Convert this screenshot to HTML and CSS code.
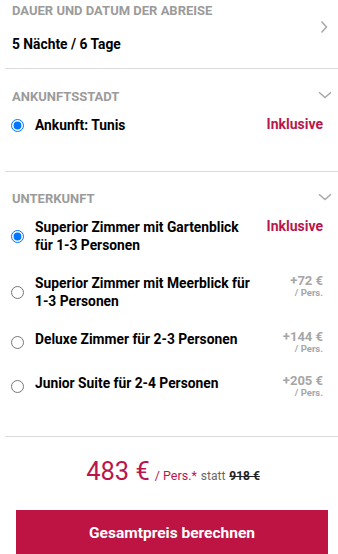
FILE: index.html
```html
<!DOCTYPE html>
<html lang="de">
<head>
<meta charset="utf-8">
<link rel="stylesheet" href="styles.css">
</head>
<body>
<div class="panel">
  <section class="block block-duration">
    <div class="duration-main">
      <div class="title">Dauer und Datum der Abreise</div>
      <div class="value">5 Nächte / 6 Tage</div>
    </div>
    <svg class="chev-right" width="8" height="14" viewBox="0 0 8 14"><polyline points="1.5,1.5 6.5,7 1.5,12.5" fill="none" stroke="#a8a8a8" stroke-width="1.5"/></svg>
  </section>

  <section class="block block-city">
    <div class="head">
      <div class="title">Ankunftsstadt</div>
      <svg class="chev-down" width="14" height="8" viewBox="0 0 14 8"><polyline points="1,1.2 7,6.5 13,1.2" fill="none" stroke="#a8a8a8" stroke-width="1.5"/></svg>
    </div>
    <label class="option">
      <input type="radio" name="city" checked>
      <span class="opt-text">Ankunft: Tunis</span>
      <span class="incl">Inklusive</span>
    </label>
  </section>

  <section class="block block-room">
    <div class="head">
      <div class="title">Unterkunft</div>
      <svg class="chev-down" width="14" height="8" viewBox="0 0 14 8"><polyline points="1,1.2 7,6.5 13,1.2" fill="none" stroke="#a8a8a8" stroke-width="1.5"/></svg>
    </div>
    <div class="options">
      <label class="option">
        <input type="radio" name="room" checked>
        <span class="opt-text">Superior Zimmer mit Gartenblick für 1-3 Personen</span>
        <span class="incl">Inklusive</span>
      </label>
      <label class="option">
        <input type="radio" name="room">
        <span class="opt-text">Superior Zimmer mit Meerblick für 1-3 Personen</span>
        <span class="extra"><span class="extra-price">+72 €</span><span class="extra-unit">/ Pers.</span></span>
      </label>
      <label class="option">
        <input type="radio" name="room">
        <span class="opt-text">Deluxe Zimmer für 2-3 Personen</span>
        <span class="extra"><span class="extra-price">+144 €</span><span class="extra-unit">/ Pers.</span></span>
      </label>
      <label class="option">
        <input type="radio" name="room">
        <span class="opt-text">Junior Suite für 2-4 Personen</span>
        <span class="extra"><span class="extra-price">+205 €</span><span class="extra-unit">/ Pers.</span></span>
      </label>
    </div>
  </section>

  <div class="total">
    <div class="price-line">
      <span class="price">483 €</span>
      <span class="per">/ Pers.*</span>
      <span class="statt">statt</span>
      <span class="old">918 €</span>
    </div>
    <button class="cta">Gesamtpreis berechnen</button>
  </div>
</div>
</body>
</html>
```

FILE: styles.css
```css
* { box-sizing: border-box; }
html, body { margin: 0; padding: 0; background: #fff; }
body {
  font-family: Roboto, "Liberation Sans", sans-serif;
  color: #000;
  width: 338px;
}
.panel {
  padding-left: 5px;
}
.block {
  border-bottom: 1px solid #dcdcdc;
}
.title {
  font-size: 13px;
  font-weight: 700;
  color: #9b9b9b;
  text-transform: uppercase;
  line-height: 16px;
  padding-left: 7px;
}
.block-duration {
  display: flex;
  align-items: flex-start;
  justify-content: space-between;
  padding: 3px 0 15px 0;
}
.value {
  margin-top: 16px;
  font-size: 13.8px;
  font-weight: 700;
  line-height: 18px;
  padding-left: 7px;
}
.chev-right {
  margin-top: 17px;
  margin-right: 10px;
}
.head {
  display: flex;
  align-items: center;
  justify-content: space-between;
  padding-right: 6px;
}
.chev-down { margin-top: -4px; }
.block-city {
  padding: 20px 0 37px 0;
}
.block-room {
  padding: 19px 0 38px 0;
}
.block-city .option { margin-top: 11px; }
.options {
  margin-top: 11px;
  display: flex;
  flex-direction: column;
  gap: 20px;
}
.option {
  display: flex;
  align-items: center;
  padding-left: 6px;
  padding-right: 15px;
}
.option input {
  margin: 0;
  width: 13px;
  height: 13px;
  flex: none;
}
.opt-text {
  align-self: flex-start;
  margin-left: 11px;
  width: 218px;
  font-size: 13.8px;
  font-weight: 700;
  line-height: 18px;
}
.incl {
  align-self: flex-start;
  margin-left: auto;
  color: #b8174b;
  font-weight: 700;
  font-size: 14px;
  line-height: 16px;
}
.extra {
  align-self: flex-start;
  margin-left: auto;
  display: flex;
  flex-direction: column;
  align-items: flex-end;
  color: #a6a6a6;
  font-weight: 700;
}
.extra-price { font-size: 13px; line-height: 14px; }
.extra-unit { font-size: 9.5px; line-height: 10px; }
.total {
  padding: 20px 10px 0 11px;
}
.price-line {
  display: flex;
  align-items: baseline;
  justify-content: center;
  line-height: 28px;
  white-space: nowrap;
  padding-left: 2px;
}
.price {
  font-size: 25.5px;
  color: #b8174b;
}
.per {
  font-size: 12.5px;
  color: #b8174b;
  margin-left: 5px;
}
.statt {
  font-size: 12px;
  color: #666;
  margin-left: 4px;
}
.old {
  font-size: 12px;
  font-weight: 700;
  color: #222;
  text-decoration: line-through;
  margin-left: 4px;
}
.cta {
  display: block;
  width: 312px;
  height: 46px;
  margin-top: 20px;
  border: 0;
  background: #be1443;
  color: #fff;
  font-family: inherit;
  font-size: 15.5px;
  font-weight: 700;
}
```
